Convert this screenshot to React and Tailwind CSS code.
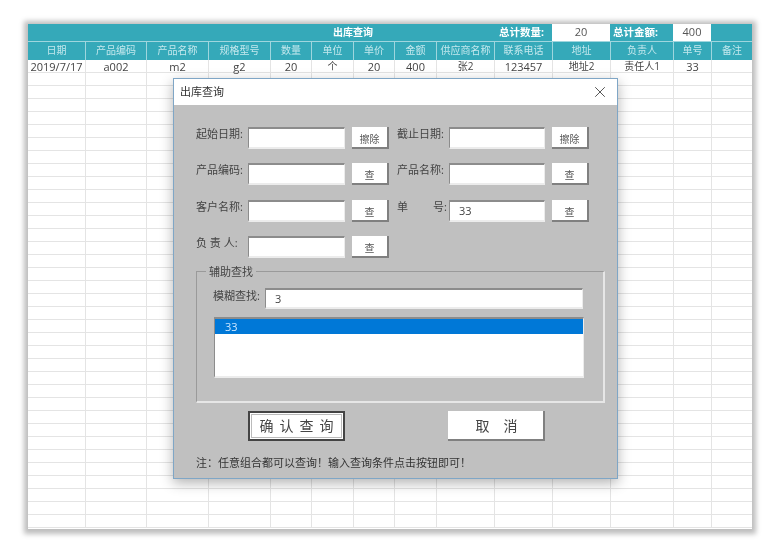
import React from 'react';
import { X } from 'lucide-react';

const COLS = 'grid grid-cols-[57px_61px_62px_62px_41px_42px_41px_42px_58px_58px_58px_63px_38px_41px]';

const headers = ['日期', '产品编码', '产品名称', '规格型号', '数量', '单位', '单价', '金额', '供应商名称', '联系电话', '地址', '负责人', '单号', '备注'];
const dataRow = ['2019/7/17', 'a002', 'm2', 'g2', '20', '个', '20', '400', '张2', '123457', '地址2', '责任人1', '33', ''];
const emptyRows = Array.from({ length: 35 }, (_, i) => i);
const NOTE = '注\uFF1A任意组合都可以查询\uFF01输入查询条件点击按钮即可\uFF01';

const SUNKEN = 'bg-white border-t-2 border-l border-t-[#8c8c8c] border-l-[#8c8c8c] border-b-2 border-r border-b-[#ececec] border-r-[#ececec]';

function Sheet() {
    return (
        <div className="ml-[28px] mt-[24px] w-[724px] h-[505px] bg-white overflow-hidden shadow-[0_1px_5px_4px_rgba(0,0,0,0.26)]">
            <div className={`${COLS} h-[17px] bg-[#35a9b9] text-white text-[10px] font-bold leading-[16px]`}>
                <div className="col-span-9 pl-[305px]">出库查询</div>
                <div className="text-[10.5px] text-center pr-[3px]">总计数量:</div>
                <div className="bg-white text-[#555] text-[11px] font-normal text-center">20</div>
                <div className="text-[10.5px] text-left pl-[3px]">总计金额:</div>
                <div className="bg-white text-[#555] text-[11px] font-normal text-center">400</div>
                <div />
            </div>
            <div className={`${COLS} h-[19px] bg-[#35a9b9] border-t border-[#9fd6de] text-[#c4e8ed] text-[10px] leading-[17px]`}>
                {headers.map((h, i) => (
                    <div key={h} className={`text-center ${i > 0 ? 'border-l border-[#9fd6de]' : ''}`}>{h}</div>
                ))}
            </div>
            <div className={`${COLS} h-[13px] text-[#444] leading-[13px] border-b border-[#e4e4e4]`}>
                {dataRow.map((d, i) => (
                    <div key={i} className={`text-center whitespace-nowrap ${/[^\x00-\x7f]/.test(d) ? 'text-[10px]' : 'text-[11px]'} ${i > 0 ? 'border-l border-[#e4e4e4]' : ''}`}>{d}</div>
                ))}
            </div>
            {emptyRows.map((r) => (
                <div key={r} className={`${COLS} h-[13px] border-b border-[#e4e4e4]`}>
                    {headers.map((h, i) => (
                        <div key={h} className={i > 0 ? 'border-l border-[#e4e4e4]' : ''} />
                    ))}
                </div>
            ))}
        </div>
    );
}

function SmallButton({ children }) {
    return (
        <button className="w-[37px] h-[22px] ml-[7px] bg-white border-r-2 border-b-2 border-[#808080] text-[#555] text-[10px] leading-[24px]">
            {children}
        </button>
    );
}

function Field({ label, value, button, inputWidth = 'w-[97px]', spread }) {
    return (
        <div className="flex items-start">
            <div className={`w-[52px] h-[22px] text-[#444] text-[11px] leading-[14px] whitespace-nowrap ${spread ? 'flex justify-between pr-[2px]' : ''}`}>
                {spread ? <><span>单</span><span>号:</span></> : label}
            </div>
            <div className={`${inputWidth} h-[22px] ${SUNKEN} text-[#444] text-[11px] leading-[18px] pl-[9px]`}>{value}</div>
            <SmallButton>{button}</SmallButton>
        </div>
    );
}

function Dialog() {
    return (
        <div className="absolute left-[173px] top-[78px] w-[445px] h-[401px] flex flex-col border border-[#7fa6c6] shadow-[0_4px_12px_rgba(0,0,0,0.3)]">
            <div className="h-[26px] shrink-0 bg-white flex items-center justify-between pl-[6px] pr-[8px]">
                <span className="text-[#333] text-[11px]">出库查询</span>
                <X className="w-[18px] h-[18px] text-[#333]" strokeWidth={1.1} />
            </div>
            <div className="flex-1 bg-[#c0c0c0] pl-[22px] pt-[22px]">
                <div className="flex flex-col gap-[14.3px]">
                    <div className="flex gap-[8px]">
                        <Field label="起始日期:" button="擦除" />
                        <Field label="截止日期:" button="擦除" inputWidth="w-[96px]" />
                    </div>
                    <div className="flex gap-[8px]">
                        <Field label="产品编码:" button="查" />
                        <Field label="产品名称:" button="查" inputWidth="w-[96px]" />
                    </div>
                    <div className="flex gap-[8px]">
                        <Field label="客户名称:" button="查" />
                        <Field spread value="33" button="查" inputWidth="w-[96px]" />
                    </div>
                    <Field label="负 责 人:" button="查" />
                </div>

                <fieldset className="mt-[6px] w-[409px] h-[139px] border-t border-l border-t-[#9a9a9a] border-l-[#9a9a9a] border-b-2 border-r-2 border-b-[#e6e6e6] border-r-[#e6e6e6]">
                    <legend className="ml-[9px] px-[3px] text-[#444] text-[11px] leading-[15px]">辅助查找</legend>
                    <div className="flex items-start mt-[9px] pl-[16px]">
                        <span className="w-[52px] text-[#444] text-[11px] leading-[16px] whitespace-nowrap">模糊查找:</span>
                        <div className={`w-[318px] h-[21px] ${SUNKEN} text-[#444] text-[11px] leading-[18px] pl-[9px]`}>3</div>
                    </div>
                    <div className={`mt-[8px] ml-[17px] w-[370px] h-[61px] ${SUNKEN}`}>
                        <div className="h-[15px] bg-[#0078d7] text-[#cfe8ff] text-[11px] leading-[15px] pl-[10px]">33</div>
                    </div>
                </fieldset>

                <div className="flex mt-[8px] pl-[52px]">
                    <button className="w-[97px] h-[30px] bg-white border-2 border-[#444] outline outline-1 -outline-offset-4 outline-[#bbb] text-[#444] text-[14px] tracking-[6px] leading-[26px] pl-[6px]">确认查询</button>
                    <button className="w-[97px] h-[30px] ml-[103px] bg-white border-r-2 border-b-2 border-[#808080] text-[#444] text-[14px] tracking-[14px] leading-[30px] pl-[16px]">取消</button>
                </div>

                <p className="mt-[14px] text-[#333] text-[11px] leading-[16px] whitespace-nowrap">{NOTE}</p>
            </div>
        </div>
    );
}

export default function App() {
    return (
        <div className="relative w-[780px] h-[553px] bg-white overflow-hidden blur-[0.4px] font-['Open_Sans','Noto_Sans_CJK_SC',sans-serif]">
            <div className="pt-[0.01px]">
                <Sheet />
            </div>
            <Dialog />
        </div>
    );
}
